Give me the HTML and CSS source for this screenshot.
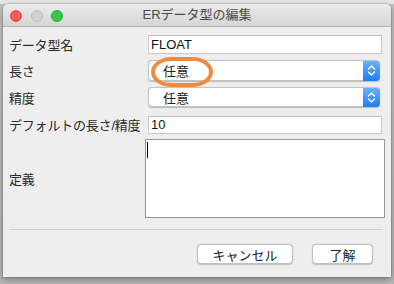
FILE: index.html
```html
<!DOCTYPE html>
<html lang="ja">
<head>
<meta charset="utf-8">
<link rel="stylesheet" href="styles.css">
</head>
<body>
<div class="desktop">
  <div class="window">
    <div class="titlebar">
      <div class="lights">
        <span class="light red"></span>
        <span class="light gray"></span>
        <span class="light green"></span>
      </div>
      <div class="title">ERデータ型の編集</div>
    </div>
    <div class="content">
      <div class="row r1">
        <div class="label">データ型名</div>
        <div class="input h19">FLOAT</div>
      </div>
      <div class="row r2">
        <div class="label">長さ</div>
        <div class="select h21">
          <span class="seltext">任意</span>
          <span class="stepper"><svg width="9" height="13" viewBox="0 0 9 13"><path d="M1.5 5 L4.5 2 L7.5 5 M1.5 8 L4.5 11 L7.5 8" fill="none" stroke="#fff" stroke-width="1.4" stroke-linecap="round" stroke-linejoin="round"/></svg></span>
          <span class="mark"></span>
        </div>
      </div>
      <div class="row r3">
        <div class="label">精度</div>
        <div class="select h20">
          <span class="seltext">任意</span>
          <span class="stepper"><svg width="9" height="13" viewBox="0 0 9 13"><path d="M1.5 5 L4.5 2 L7.5 5 M1.5 8 L4.5 11 L7.5 8" fill="none" stroke="#fff" stroke-width="1.4" stroke-linecap="round" stroke-linejoin="round"/></svg></span>
        </div>
      </div>
      <div class="row r4">
        <div class="label">デフォルトの長さ/精度</div>
        <div class="input h18">10</div>
      </div>
      <div class="row r5">
        <div class="label">定義</div>
        <div class="textarea"><span class="caret"></span></div>
      </div>
      <div class="sep"></div>
      <div class="buttons">
        <div class="btn cancel">キャンセル</div>
        <div class="btn ok">了解</div>
      </div>
    </div>
  </div>
</div>
</body>
</html>
```
FILE: styles.css
```css
* { box-sizing: border-box; }
html, body { margin: 0; padding: 0; }
body {
  width: 394px;
  height: 284px;
  overflow: hidden;
  background: linear-gradient(#e8e8e8 0, #e8e8e8 4px, #c4c4c4 4px, #b6b6b6 100%);
  font-family: "Liberation Sans", "Noto Sans CJK JP", sans-serif;
  color: #222;
}
.desktop {
  padding: 4px 3px 0 3px;
}
.window {
  width: 388px;
  height: 273px;
  background: #eeeeee;
  border-radius: 5px 5px 0 0;
  box-shadow: 0 2px 7px rgba(0,0,0,0.35), 0 0 0 0.5px rgba(0,0,0,0.2);
  overflow: hidden;
}
.titlebar {
  height: 23px;
  background: linear-gradient(#ebebeb, #d5d5d5);
  border-bottom: 1px solid #b4b4b4;
  display: flex;
  align-items: center;
  position: relative;
}
.lights {
  display: flex;
  gap: 8.5px;
  padding-left: 7px;
  padding-top: 1px;
}
.light {
  width: 12px;
  height: 12px;
  border-radius: 50%;
  display: block;
}
.red { background: #fc5b57; border: 0.5px solid #de4741; }
.gray { background: #d1d1d1; border: 0.5px solid #bdbdbd; }
.green { background: #35c84b; border: 0.5px solid #2aa93a; }
.title {
  position: absolute;
  left: 0; right: 0; top: 0;
  height: 22px;
  line-height: 22px;
  text-align: center;
  font-size: 13px;
  color: #4a4a4a;
}
.content {
  padding: 8px 9px 0 6px;
}
.row {
  display: flex;
  align-items: center;
}
.r2, .r3 { margin-top: 6px; }
.r4 { margin-top: 8px; }
.r5 { margin-top: 5px; }
.label {
  width: 139px;
  flex: none;
  font-size: 13px;
  color: #2a2a2a;
  white-space: nowrap;
  letter-spacing: -0.2px;
}
.input {
  flex: 1;
  background: #fff;
  border: 1px solid #c9c9c9;
  border-top-color: #bdbdbd;
  font-size: 13px;
  padding-left: 2px;
  display: flex;
  align-items: center;
  color: #111;
}
.h19 { height: 19px; }
.h18 { height: 18px; }
.h21 { height: 21px; }
.h20 { height: 20px; }
.select {
  flex: 1;
  position: relative;
  background: #fff;
  border-radius: 4px;
  border: 0.5px solid #c4c4c4;
  box-shadow: 0 0.5px 1px rgba(0,0,0,0.22);
  display: flex;
  align-items: center;
  margin-right: 2px;
}
.seltext {
  flex: 1;
  padding-left: 14px;
  font-size: 13px;
  color: #222;
}
.stepper {
  width: 17px;
  align-self: stretch;
  margin: -0.5px -0.5px -0.5px 0;
  background: linear-gradient(#6bb1fb, #1d7ef4);
  border-radius: 0 4px 4px 0;
  display: flex;
  align-items: center;
  justify-content: center;
}
.mark {
  position: absolute;
  left: 2px;
  top: -4px;
  width: 62px;
  height: 30px;
  border: 4px solid #ef8a40;
  border-radius: 20px / 15px;
}
.textarea {
  flex: 1;
  height: 79px;
  margin-left: -3px;
  margin-right: -3px;
  background: #fff;
  border: 1.5px solid #959595;
  position: relative;
}
.caret {
  position: absolute;
  left: 1px;
  top: 2px;
  width: 1px;
  height: 16px;
  background: #000;
}
.sep {
  margin-top: 11px;
  height: 1px;
  background: #d1d1d1;
  margin-right: -1px;
}
.buttons {
  margin-top: 14px;
  display: flex;
  justify-content: flex-end;
  gap: 19px;
  padding-right: 9px;
}
.btn {
  height: 20px;
  background: #fff;
  border: 0.5px solid #bfbfbf;
  border-radius: 4px;
  box-shadow: 0 0.5px 1px rgba(0,0,0,0.2);
  font-size: 13px;
  display: flex;
  align-items: center;
  justify-content: center;
  color: #222;
}
.cancel { width: 96px; }
.ok { width: 61px; }
```
